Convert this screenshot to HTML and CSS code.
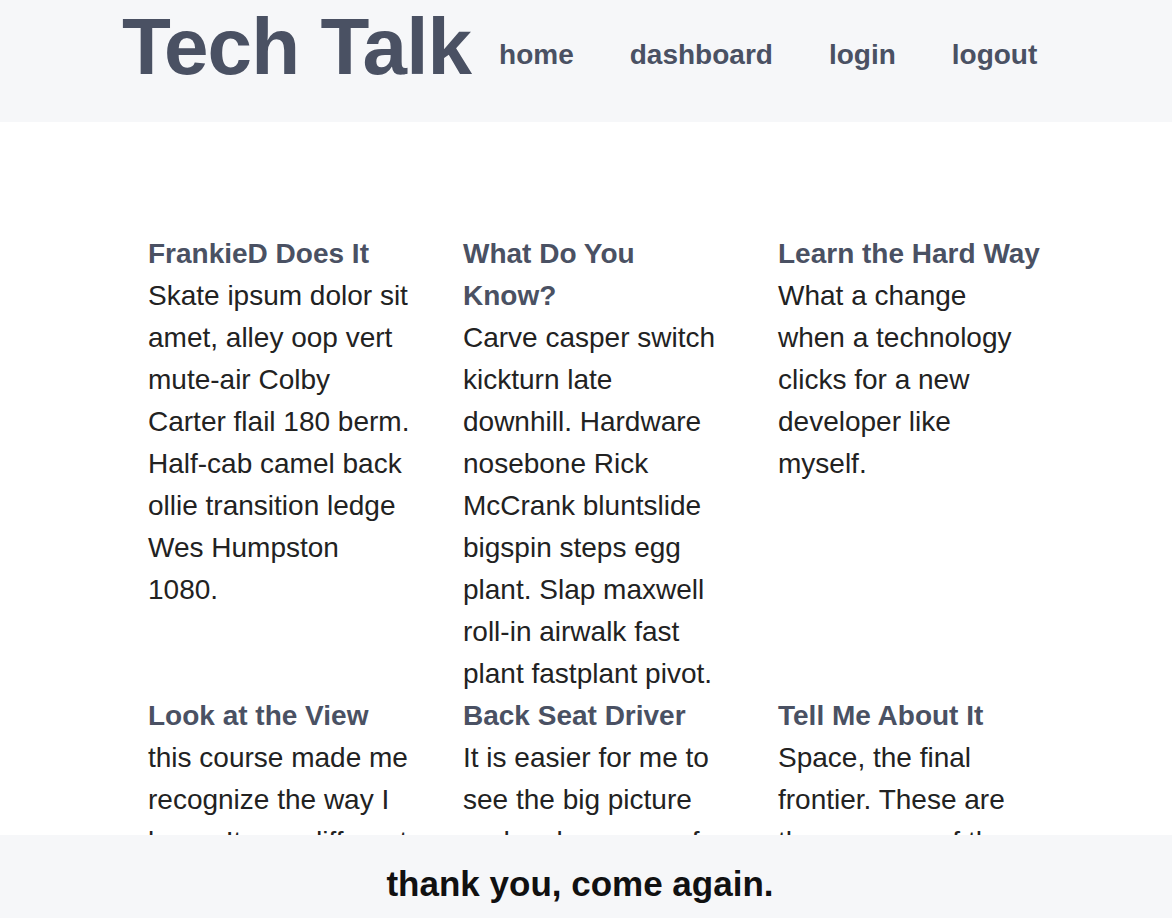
FILE: index.html
```html
<!DOCTYPE html>
<html lang="en">
<head>
<meta charset="utf-8">
<title>Tech Talk</title>
<link rel="stylesheet" href="styles.css">
</head>
<body>
<header class="site-header">
  <h1 class="brand">Tech Talk</h1>
  <nav class="nav">
    <a class="nav-link" href="#">home</a>
    <a class="nav-link" href="#">dashboard</a>
    <a class="nav-link" href="#">login</a>
    <a class="nav-link" href="#">logout</a>
  </nav>
</header>
<main class="posts">
  <article class="post">
    <h2 class="post-title">FrankieD Does It</h2>
    <p class="post-body">Skate ipsum dolor sit amet, alley oop vert mute-air Colby Carter flail 180 berm. Half-cab camel back ollie transition ledge Wes Humpston 1080.</p>
  </article>
  <article class="post">
    <h2 class="post-title">What Do You Know?</h2>
    <p class="post-body">Carve casper switch kickturn late downhill. Hardware nosebone Rick McCrank bluntslide bigspin steps egg plant. Slap maxwell roll-in airwalk fast plant fastplant pivot.</p>
  </article>
  <article class="post">
    <h2 class="post-title">Learn the Hard Way</h2>
    <p class="post-body">What a change when a technology clicks for a new developer like myself.</p>
  </article>
  <article class="post">
    <h2 class="post-title">Look at the View</h2>
    <p class="post-body">this course made me recognize the way I learn. It was different than I thought.</p>
  </article>
  <article class="post">
    <h2 class="post-title">Back Seat Driver</h2>
    <p class="post-body">It is easier for me to see the big picture and make sense of it.</p>
  </article>
  <article class="post">
    <h2 class="post-title">Tell Me About It</h2>
    <p class="post-body">Space, the final frontier. These are the voyages of the starship Enterprise.</p>
  </article>
</main>
<footer class="site-footer">
  <p class="footer-text">thank you, come again.</p>
</footer>
</body>
</html>
```

FILE: styles.css
```css
* {
  box-sizing: border-box;
}

html, body {
  margin: 0;
  padding: 0;
}

body {
  font-family: "Liberation Sans", Arial, Helvetica, sans-serif;
  color: #222222;
  background: #ffffff;
}

.site-header {
  height: 122px;
  background: #f6f7f9;
  display: flex;
  align-items: flex-start;
  padding-left: 122px;
}

.brand {
  margin: 7px 0 0 0;
  font-size: 80px;
  line-height: 80px;
  font-weight: 700;
  letter-spacing: -0.9px;
  color: #4a5163;
}

.nav {
  display: flex;
  gap: 56px;
  margin-top: 41px;
  margin-left: 28px;
}

.nav-link {
  font-size: 28px;
  line-height: 28px;
  font-weight: 700;
  color: #4a5163;
  text-decoration: none;
}

.posts {
  display: grid;
  grid-template-columns: repeat(3, 262px);
  column-gap: 53px;
  row-gap: 0;
  padding: 111px 0 120px 148px;
}

.post-title {
  margin: 0;
  font-size: 28px;
  line-height: 42px;
  font-weight: 700;
  color: #4a5163;
}

.post-body {
  margin: 0;
  font-size: 28px;
  line-height: 42px;
  color: #222222;
}

.site-footer {
  position: fixed;
  left: 0;
  right: 0;
  bottom: 0;
  height: 83px;
  background: #f6f7f9;
  display: flex;
  justify-content: center;
  align-items: center;
  padding-right: 12px;
}

.footer-text {
  margin: 0;
  font-size: 35px;
  line-height: 35px;
  font-weight: 700;
  color: #111111;
  padding-top: 13px;
}
```
